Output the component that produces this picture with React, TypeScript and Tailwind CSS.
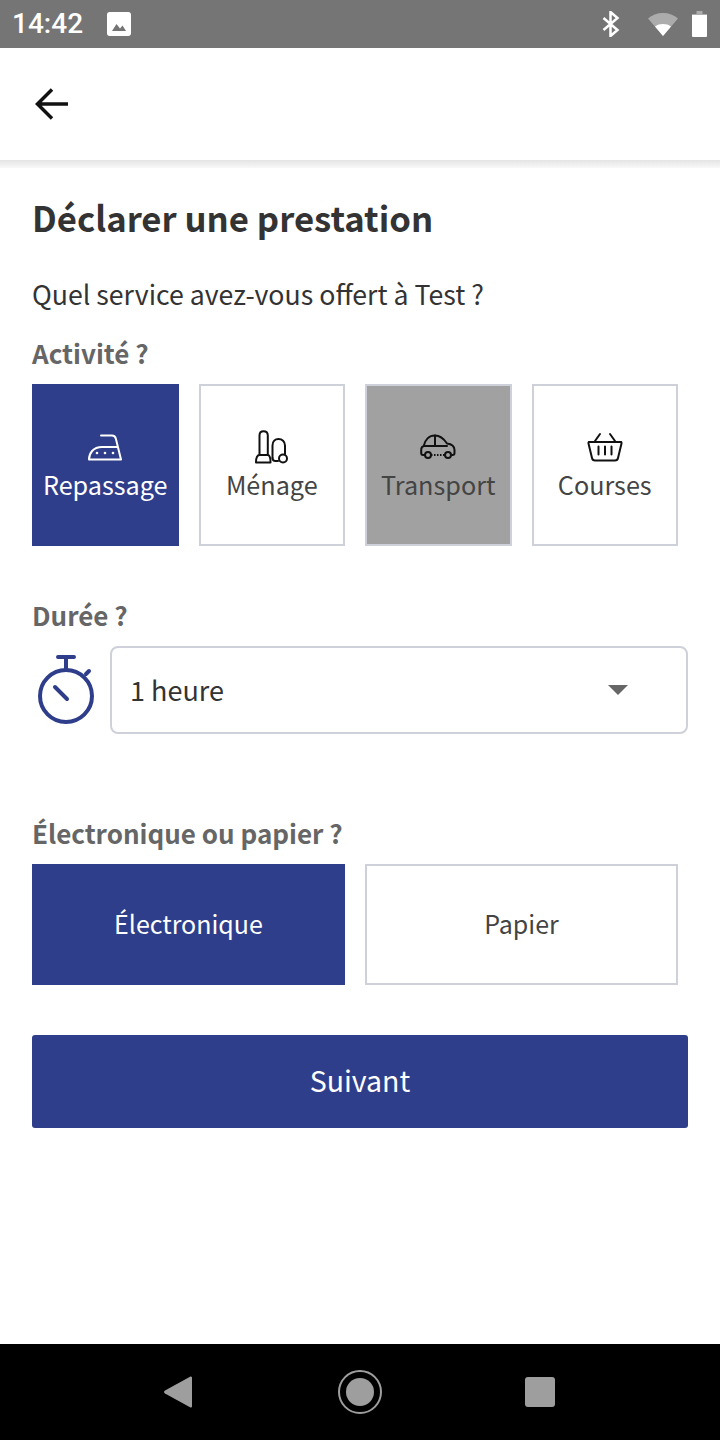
const FONT = "font-['Noto_Sans_CJK_SC','Noto_Sans',sans-serif]";

function IronIcon() {
  return (
    <svg width="34" height="27" viewBox="0 0 34 27" fill="none" stroke="currentColor" strokeWidth="2" strokeLinecap="round" strokeLinejoin="round">
      <path d="M13 1.500h11c2.200 0 3.400 1.200 3.900 3.400L33 25.500H1c0-6 4-12.500 13-12.500h16" />
      <circle cx="9" cy="19" r="1.300" fill="currentColor" stroke="none" />
      <circle cx="17" cy="19" r="1.300" fill="currentColor" stroke="none" />
      <circle cx="25" cy="19" r="1.300" fill="currentColor" stroke="none" />
    </svg>
  );
}

function VacuumIcon() {
  return (
    <svg width="34" height="34" viewBox="0 0 34 34" fill="none" stroke="currentColor" strokeWidth="2" strokeLinecap="round" strokeLinejoin="round">
      <path d="M4.500 25V5.500C4.500 2.800 6 1.300 8.500 1.300S12.800 2.800 12.800 5.500V25" />
      <path d="M1 32.500c0-4 1.200-7.500 3.500-7.500h8.300c2 0 2.700 3.500 2.700 7.500z" />
      <path d="M17.500 28V15.500c0-4 2.500-6.500 6-6.500s6.500 2.500 6.500 6.500V24" />
      <path d="M17.500 28c0 2 1 3 3 3h2.500" />
      <circle cx="28" cy="28.500" r="4" />
    </svg>
  );
}

function CarIcon() {
  return (
    <svg width="36" height="26" viewBox="0 0 36 26" fill="none" stroke="currentColor" strokeWidth="2" strokeLinecap="round" strokeLinejoin="round">
      <path d="M5 21H3c-1 0-1.800-.8-1.800-2v-3c0-2 1-3.500 2.500-4C5 6 9 1.500 15 1.500c5.500 0 9 3.500 12 8 4 .5 7.500 2.500 7.500 6.500v3c0 1.200-.8 2-2 2H31" />
      <path d="M11 21h14" strokeDasharray="1.500 1.500" strokeLinecap="butt" />
      <circle cx="8" cy="21" r="3" />
      <circle cx="28" cy="21" r="3" />
      <path d="M3.700 12H27M15 1.500V12" />
    </svg>
  );
}

function BasketIcon() {
  return (
    <svg width="36" height="30" viewBox="0 0 36 30" fill="none" stroke="currentColor" strokeWidth="2" strokeLinecap="round" strokeLinejoin="round">
      <path d="M2 10h32" />
      <path d="M2.500 10c-.8 0-1.300.6-1 1.500L5 26c.3 1.500 1.200 2.500 3 2.500h20c1.800 0 2.700-1 3-2.500l3.500-14.500c.3-.9-.2-1.500-1-1.500" />
      <path d="M8 9l5-7M28 9l-5-7M11.500 14.500v8M18 14.500v8M24.500 14.500v8" />
    </svg>
  );
}

function StopwatchIcon() {
  return (
    <svg width="60" height="72" viewBox="0 0 60 72" fill="none" stroke="#2f3e8a" strokeWidth="4" strokeLinecap="round">
      <circle cx="30" cy="42" r="26" />
      <path d="M22 3h16M30 3v12M50 20l3-3M19 33l12 12" />
    </svg>
  );
}

function StatusBar() {
  return (
    <div className="h-12 bg-[#757575] flex items-center pl-[12px] pr-[13px] text-white shrink-0">
      <span className="font-['Roboto',sans-serif] text-[28px] font-medium leading-none">14:42</span>
      <svg className="ml-[24px]" width="24" height="24" viewBox="0 0 24 24" fill="currentColor">
        <path d="M24 21.500V2.500C24 1.100 22.900 0 21.500 0h-19C1.100 0 0 1.100 0 2.500v19C0 22.900 1.100 24 2.500 24h19c1.400 0 2.500-1.100 2.500-2.500zM5 19l4.500-7 3.500 4.500 2.500-3L19 19z" fillRule="evenodd" />
      </svg>
      <div className="ml-auto flex items-center">
        <svg width="18" height="26" viewBox="0 0 18 26" fill="none" stroke="currentColor" strokeWidth="2.500">
          <path d="M1.500 7l14 12-7 6V1l7 6-14 12" />
        </svg>
        <svg className="ml-[28px]" width="30" height="24" viewBox="0 0 30 24">
          <path d="M0 6.500C4 3 9 1 15 1s11 2 15 5.500L15 24z" fill="#ffffff" fillOpacity="0.4" />
          <path d="M7 14.500C9 12.800 12 12 15 12s6 .8 8 2.500L15 24z" fill="#ffffff" />
        </svg>
        <svg className="ml-[14px]" width="15" height="26" viewBox="0 0 15 26">
          <path d="M4.500 0h6v3H15v3H0V3h4.500z" fill="#ffffff" fillOpacity="0.4" />
          <path d="M0 4h15v21a1 1 0 0 1-1 1H1a1 1 0 0 1-1-1z" fill="#ffffff" />
        </svg>
      </div>
    </div>
  );
}

function NavBar() {
  return (
    <div className="h-24 bg-black flex items-center justify-center shrink-0 mt-auto">
      <div className="grid grid-cols-3 w-[543px] items-center justify-items-center">
        <svg className="-ml-[3px]" width="28" height="32" viewBox="0 0 28 32" fill="#9e9e9e">
          <path d="M26.500 0.500c1 0 1.500.5 1.500 1.500v28c0 1-.5 1.500-1.500 1.500L1 17.500c-1.300-.8-1.300-2.200 0-3z" />
        </svg>
        <div className="w-[44px] h-[44px] rounded-full border-2 border-[#9e9e9e] flex items-center justify-center">
          <div className="w-7 h-7 rounded-full bg-[#9e9e9e]" />
        </div>
        <div className="w-[30px] h-[30px] -ml-[2px] rounded-[3px] bg-[#9e9e9e]" />
      </div>
    </div>
  );
}

const activities = [
  { label: "Repassage", icon: <IronIcon />, cls: "bg-[#2f3e8a] border-[#2f3e8a] text-white", iconCls: "text-white" },
  { label: "Ménage", icon: <VacuumIcon />, cls: "bg-white border-[#ced1da] text-[#444444]", iconCls: "text-[#111111]" },
  { label: "Transport", icon: <CarIcon />, cls: "bg-[#a1a1a1] border-[#ced1da] text-[#444444]", iconCls: "text-[#111111]" },
  { label: "Courses", icon: <BasketIcon />, cls: "bg-white border-[#ced1da] text-[#444444]", iconCls: "text-[#111111]" },
];

export default function App() {
  return (
    <div className={`${FONT} w-[720px] h-[1440px] flex flex-col bg-white overflow-hidden`}>
      <StatusBar />

      <header className="h-[112px] shrink-0 flex items-center pl-[34px] relative">
        <svg width="36" height="36" viewBox="0 0 36 36" fill="none" stroke="#111111" strokeWidth="3.500">
          <path d="M34 18H5M18 3.500L3.500 18 18 32.500" />
        </svg>
        <div className="absolute left-0 right-0 top-full h-2 bg-gradient-to-b from-[#e4e4e4] to-[#f8f8f8]" />
      </header>

      <main className="pl-8 pr-8 flex-1">
        <h1 className="mt-[35px] text-[34.700px] leading-[44px] font-semibold text-[#333333]">Déclarer une prestation</h1>
        <p className="mt-[37px] text-[26.700px] leading-[36px] text-[#333333]">Quel service avez-vous offert à Test ?</p>
        <h2 className="mt-[23px] text-[26px] leading-[36px] font-semibold text-[#666666]">Activité ?</h2>

        <div className="mt-[13px] mr-[10px] grid grid-cols-4 gap-5">
          {activities.map((a) => (
            <button key={a.label} className={`h-[162px] border-2 flex flex-col items-center ${a.cls}`}>
              <span className={`h-[38px] mt-[42px] flex items-center justify-center ${a.iconCls}`}>{a.icon}</span>
              <span className="text-[25.200px] leading-[36px]">{a.label}</span>
            </button>
          ))}
        </div>

        <h2 className="mt-[51px] text-[26px] leading-[36px] font-semibold text-[#666666]">Durée ?</h2>

        <div className="mt-[13px] flex items-center">
          <div className="w-[78px] shrink-0 pl-[4px]">
            <StopwatchIcon />
          </div>
          <div className="flex-1 h-[88px] rounded-lg border-2 border-[#ced1da] flex items-center pl-[18px] pr-[58px]">
            <span className="text-[27px] text-[#333333]">1 heure</span>
            <span className="ml-auto w-0 h-0 border-x-[10px] border-x-transparent border-t-[10px] border-t-[#666666]" />
          </div>
        </div>

        <h2 className="mt-[81px] text-[26px] leading-[36px] font-semibold text-[#666666]">Électronique ou papier ?</h2>

        <div className="mt-[13px] mr-[10px] grid grid-cols-2 gap-5">
          <button className="h-[121px] pb-[2px] border-2 border-[#2f3e8a] bg-[#2f3e8a] text-white text-[25px]">Électronique</button>
          <button className="h-[121px] pb-[2px] border-2 border-[#ced1da] bg-white text-[#444444] text-[25px]">Papier</button>
        </div>

        <button className="mt-[50px] w-full h-[93px] pb-[2px] rounded-[3px] bg-[#2f3e8a] text-white text-[28.500px]">Suivant</button>
      </main>

      <NavBar />
    </div>
  );
}
